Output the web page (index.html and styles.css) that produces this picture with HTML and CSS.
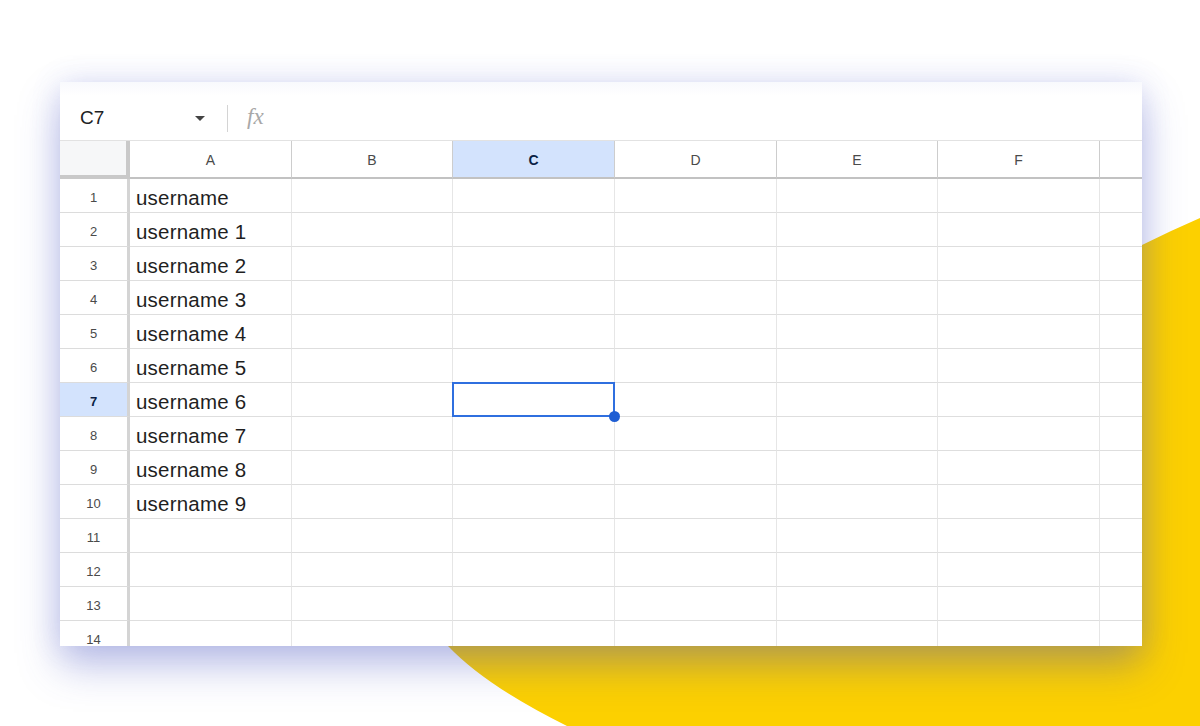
FILE: index.html
```html
<!DOCTYPE html>
<html>
<head>
<meta charset="utf-8">
<link rel="stylesheet" href="styles.css">
</head>
<body>
<div class="page">
  <svg class="blob" width="1200" height="726" viewBox="0 0 1200 726">
    <path d="M567 726 Q486 686 448 646 L430 600 L1130 250 L1142 245 Q1170 231 1200 218 L1200 726 Z" fill="#fcd000"/>
  </svg>
  <div class="card">
    <div class="formula-bar">
      <span class="namebox">C7</span>
      <span class="caret"></span>
      <span class="divider"></span>
      <span class="fx">fx</span>
    </div>
    <div class="grid">
      <div class="corner"></div>
      <div class="colh">A</div>
      <div class="colh">B</div>
      <div class="colh active">C</div>
      <div class="colh">D</div>
      <div class="colh">E</div>
      <div class="colh">F</div>
      <div class="colh last"></div>

      <div class="rowh">1</div><div class="cell">username</div><div class="cell"></div><div class="cell"></div><div class="cell"></div><div class="cell"></div><div class="cell"></div><div class="cell last"></div>
      <div class="rowh">2</div><div class="cell">username 1</div><div class="cell"></div><div class="cell"></div><div class="cell"></div><div class="cell"></div><div class="cell"></div><div class="cell last"></div>
      <div class="rowh">3</div><div class="cell">username 2</div><div class="cell"></div><div class="cell"></div><div class="cell"></div><div class="cell"></div><div class="cell"></div><div class="cell last"></div>
      <div class="rowh">4</div><div class="cell">username 3</div><div class="cell"></div><div class="cell"></div><div class="cell"></div><div class="cell"></div><div class="cell"></div><div class="cell last"></div>
      <div class="rowh">5</div><div class="cell">username 4</div><div class="cell"></div><div class="cell"></div><div class="cell"></div><div class="cell"></div><div class="cell"></div><div class="cell last"></div>
      <div class="rowh">6</div><div class="cell">username 5</div><div class="cell"></div><div class="cell"></div><div class="cell"></div><div class="cell"></div><div class="cell"></div><div class="cell last"></div>
      <div class="rowh active">7</div><div class="cell">username 6</div><div class="cell"></div><div class="cell sel"></div><div class="cell"></div><div class="cell"></div><div class="cell"></div><div class="cell last"></div>
      <div class="rowh">8</div><div class="cell">username 7</div><div class="cell"></div><div class="cell"></div><div class="cell"></div><div class="cell"></div><div class="cell"></div><div class="cell last"></div>
      <div class="rowh">9</div><div class="cell">username 8</div><div class="cell"></div><div class="cell"></div><div class="cell"></div><div class="cell"></div><div class="cell"></div><div class="cell last"></div>
      <div class="rowh">10</div><div class="cell">username 9</div><div class="cell"></div><div class="cell"></div><div class="cell"></div><div class="cell"></div><div class="cell"></div><div class="cell last"></div>
      <div class="rowh">11</div><div class="cell"></div><div class="cell"></div><div class="cell"></div><div class="cell"></div><div class="cell"></div><div class="cell"></div><div class="cell last"></div>
      <div class="rowh">12</div><div class="cell"></div><div class="cell"></div><div class="cell"></div><div class="cell"></div><div class="cell"></div><div class="cell"></div><div class="cell last"></div>
      <div class="rowh">13</div><div class="cell"></div><div class="cell"></div><div class="cell"></div><div class="cell"></div><div class="cell"></div><div class="cell"></div><div class="cell last"></div>
      <div class="rowh">14</div><div class="cell"></div><div class="cell"></div><div class="cell"></div><div class="cell"></div><div class="cell"></div><div class="cell"></div><div class="cell last"></div>
    </div>
  </div>
</div>
</body>
</html>
```

FILE: styles.css
```css
* { box-sizing: border-box; }
html, body { margin: 0; padding: 0; }
body {
  width: 1200px;
  height: 726px;
  overflow: hidden;
  background: #ffffff;
  font-family: "Liberation Sans", Arial, sans-serif;
}
.page {
  position: relative;
  width: 1200px;
  height: 726px;
  padding: 82px 58px 0 60px;
}
.blob {
  position: absolute;
  left: 0;
  top: 0;
}
.card {
  position: relative;
  width: 1082px;
  height: 564px;
  background: #ffffff;
  overflow: hidden;
  box-shadow: 0 20px 38px rgba(70, 80, 190, 0.35), 0 0 28px rgba(90, 100, 210, 0.16);
}
.formula-bar {
  height: 59px;
  display: flex;
  align-items: center;
  border-bottom: 1px solid #e2e2e2;
  padding-left: 20px;
  padding-top: 14px;
  background: linear-gradient(#f8f9fd 0, #ffffff 14px);
}
.namebox {
  font-size: 19px;
  color: #202124;
  width: 115px;
}
.caret {
  width: 0;
  height: 0;
  border-left: 5px solid transparent;
  border-right: 5px solid transparent;
  border-top: 5px solid #444;
  margin-top: 1px;
}
.divider {
  width: 1px;
  height: 27px;
  background: #d4d4d4;
  margin-left: 22px;
}
.fx {
  font-family: "Liberation Serif", "Times New Roman", serif;
  font-style: italic;
  font-size: 23px;
  color: #a8a8a8;
  margin-left: 19px;
  margin-top: -2px;
}
.grid {
  display: grid;
  grid-template-columns: 70px 162px 161px 162px 162px 161px 162px 42px;
  grid-template-rows: 38px repeat(14, 34px);
}
.corner {
  background: #f6f7f8;
  border-right: 4px solid #c9c9c9;
  border-bottom: 4px solid #c9c9c9;
}
.colh {
  display: flex;
  align-items: center;
  justify-content: center;
  font-size: 14px;
  color: #4a4a4a;
  border-right: 1px solid #cdcdcd;
  border-bottom: 2px solid #c2c2c2;
  padding-top: 2px;
}
.colh.last { border-right: none; }
.colh.active {
  background: #d3e3fd;
  color: #0b1f45;
  font-weight: bold;
}
.rowh {
  display: flex;
  align-items: center;
  justify-content: center;
  font-size: 13px;
  color: #4a4a4a;
  border-right: 3px solid #d4d4d4;
  border-bottom: 1px solid #dcdcdc;
  padding-top: 3px;
}
.rowh.active {
  background: #d3e3fd;
  color: #0b1f45;
  font-weight: bold;
}
.cell {
  display: flex;
  align-items: center;
  padding-left: 6px;
  padding-top: 4px;
  font-size: 20.5px;
  letter-spacing: 0.2px;
  color: #1f1f1f;
  border-right: 1px solid #e6e6e6;
  border-bottom: 1px solid #dedede;
  white-space: nowrap;
}
.cell.last { border-right: none; }
.cell.sel { position: relative; }
.cell.sel::before {
  content: "";
  position: absolute;
  left: -1px;
  top: -1px;
  right: -1px;
  bottom: -1px;
  border: 2px solid #2f6fdf;
}
.cell.sel::after {
  content: "";
  position: absolute;
  right: -6px;
  bottom: -6px;
  width: 11px;
  height: 11px;
  border-radius: 50%;
  background: #1f5ed3;
}
```
